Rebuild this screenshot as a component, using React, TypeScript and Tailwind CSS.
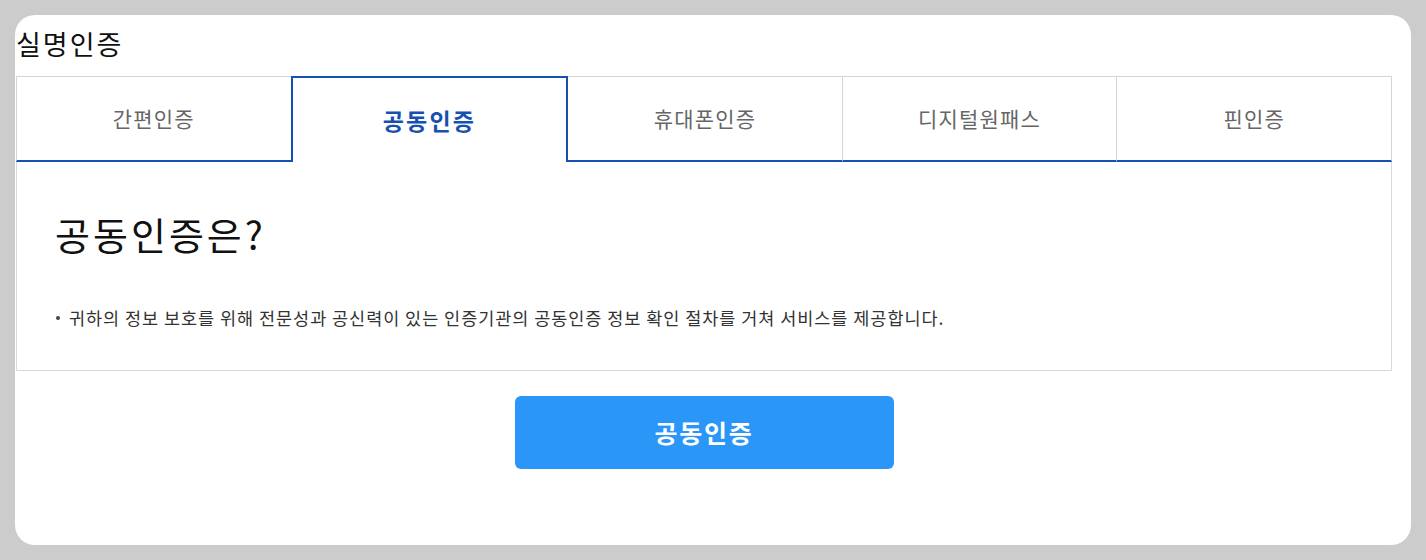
import React from 'react';

const tabs = ['간편인증', '공동인증', '휴대폰인증', '디지털원패스', '핀인증'];

export default function App() {
  const active = 1;

  return (
    <div className="h-[560px] bg-[#cccccc] p-[15px] font-['Noto_Sans_CJK_KR','Noto_Sans',sans-serif]">
      <div className="h-[530px] rounded-[20px] bg-white pl-px pr-[19px]">
        {/* 타이틀 */}
        <div className="flex h-[61px] items-center pb-[2px] text-[27px] tracking-[2px] text-[#111]">실명인증</div>

        {/* 탭 */}
        <div className="flex h-[86px]">
          {tabs.map((t, i) => {
            const isActive = i === active;
            const afterActive = i === active + 1;
            return (
              <div
                key={t}
                className={
                  isActive
                    ? 'flex flex-1 items-center justify-center border-2 border-b-0 border-[#1650b0] text-[23px] font-bold tracking-[2.1px] text-[#1650b0]'
                    : `flex flex-1 items-center justify-center border-t border-[#d5d5d5] border-b-2 border-b-[#1650b0] text-[21px] tracking-[1.2px] text-[#666] ${
                        afterActive ? '' : 'border-l'
                      } ${i === tabs.length - 1 ? 'border-r' : ''}`
                }
              >
                {t}
              </div>
            );
          })}
        </div>

        {/* 내용 */}
        <div className="h-[209px] border-x border-b border-[#d9d9d9] px-[38px] pt-[50px]">
          <h2 className="h-[44px] text-[38px] leading-[44px] tracking-[3px] text-[#111]">공동인증은?</h2>
          <ul className="mt-[50px]">
            <li className="flex items-center text-[17.5px] leading-[24px] tracking-[0.95px] text-[#333]">
              <span className="mr-[9px] ml-[1px] h-[4px] w-[4px] rounded-full bg-[#444]" />
              귀하의 정보 보호를 위해 전문성과 공신력이 있는 인증기관의 공동인증 정보 확인 절차를 거쳐 서비스를 제공합니다.
            </li>
          </ul>
        </div>

        {/* 버튼 */}
        <div className="flex justify-center pt-[25px]">
          <button className="h-[73px] w-[379px] rounded-[6px] bg-[#2a96f8] text-[25px] font-bold tracking-[1.8px] text-white">
            공동인증
          </button>
        </div>
      </div>
    </div>
  );
}
